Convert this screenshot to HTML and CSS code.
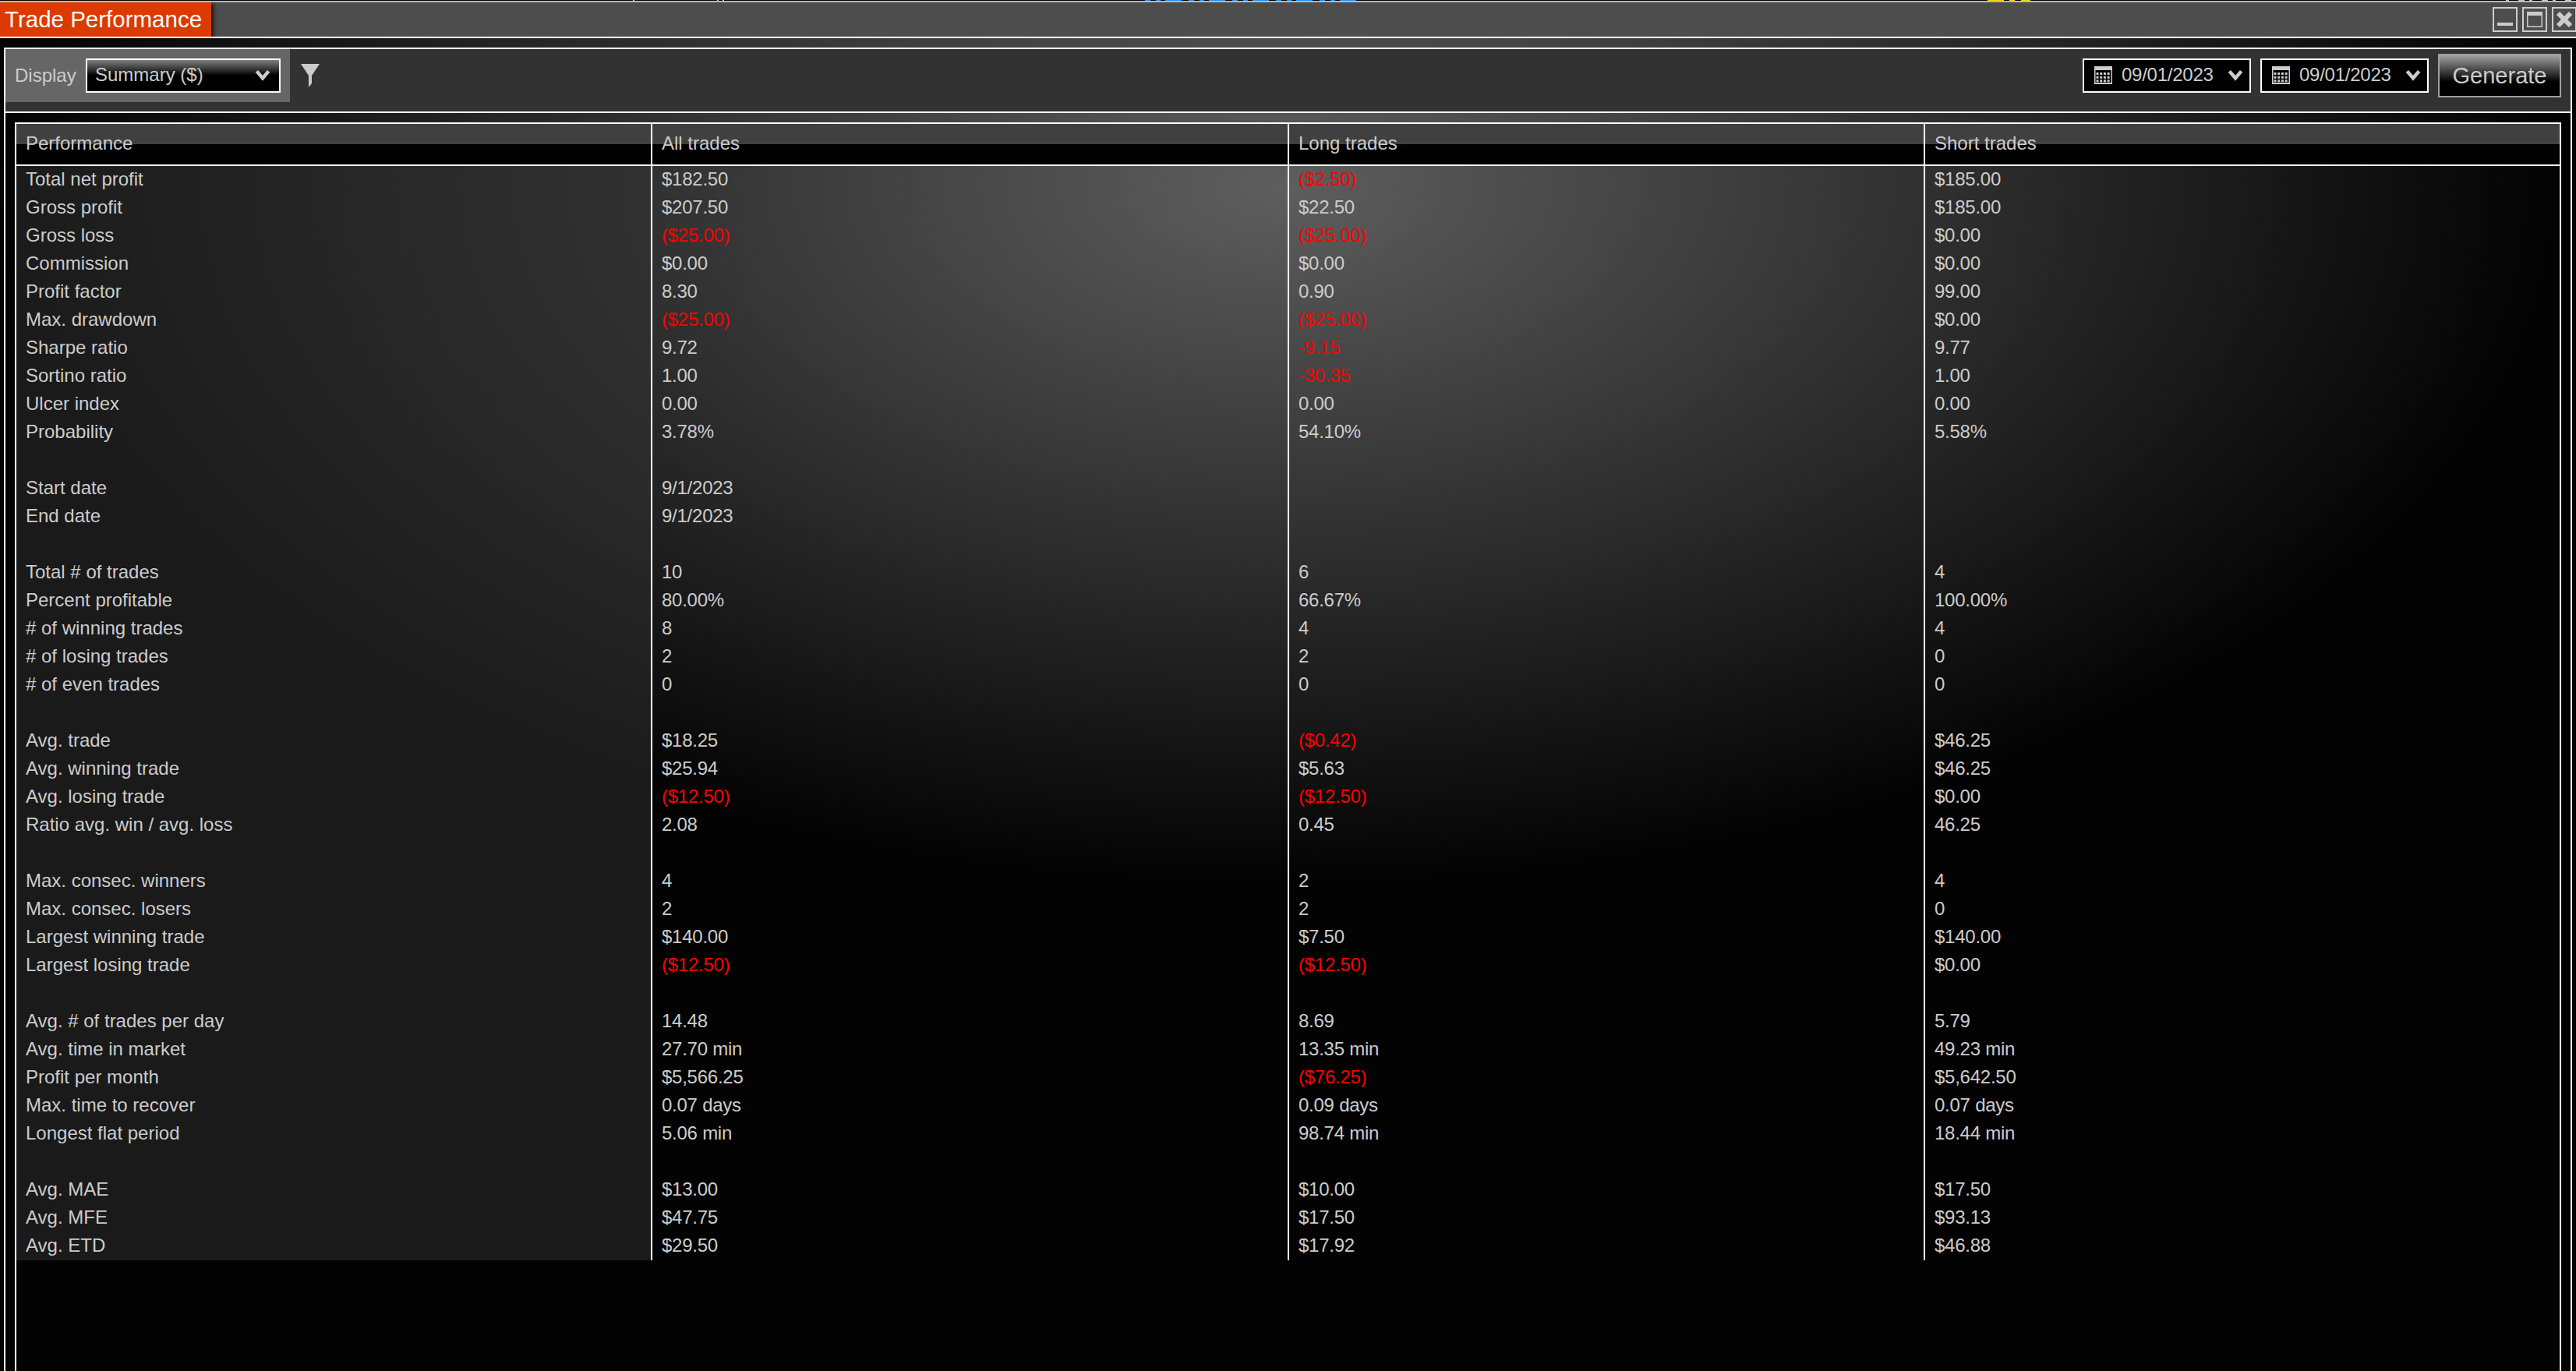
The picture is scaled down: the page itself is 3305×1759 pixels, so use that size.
FILE: index.html
```html
<!DOCTYPE html>
<html lang="en">
<head>
    <meta charset="UTF-8">
    <title>Trade Performance</title>
    <link rel="stylesheet" href="styles.css">
</head>
<body>

<div class="window">
    <div class="behind">
        <span class="behind-white"></span>
        <span class="behind-blue"></span>
        <span class="behind-yellow"></span>
        <span class="behind-end"></span>
    </div>

    <div class="titlebar">
        <div class="title">Trade Performance</div>
        <div class="window-buttons">
            <svg width="32" height="32" viewBox="0 0 32 32"><rect x="1" y="1" width="30" height="30"/><path class="solid" d="M6 20h20v4H6z"/></svg>
            <svg width="32" height="32" viewBox="0 0 32 32"><rect x="1" y="1" width="30" height="30"/><path class="solid" d="M6 6h20v20H6zM7.500 11v13.500h17V11z" fill-rule="evenodd"/></svg>
            <svg width="32" height="32" viewBox="0 0 32 32"><rect x="1" y="1" width="30" height="30"/><path class="cross" d="M8 8l16 16M24 8L8 24"/></svg>
        </div>
    </div>

    <div class="frame">
        <div class="toolbar">
            <div class="display">
                <span>Display</span>
                <div class="select">
                    <span>Summary ($)</span>
                    <svg class="chevron" width="20" height="16" viewBox="0 0 20 16"><path d="M2.400 3.400l7.600 8.900 7.600-8.900"/></svg>
                </div>
            </div>
            <svg class="filter" width="24" height="30" viewBox="0 0 24 30"><path d="M0 0h24L14 15v10l-4 5V15z"/></svg>

            <div class="actions">
                <div class="date">
                    <svg class="calendar" width="23" height="23" viewBox="0 0 23 23"><path d="M0 0h23v23H0zM1.500 5v16h20V5z" fill-rule="evenodd"/><path class="days" d="M2.500 9.500h18M2.500 14.200h18M2.500 18.800h18"/></svg>
                    <span>09/01/2023</span>
                    <svg class="chevron" width="20" height="16" viewBox="0 0 20 16"><path d="M2.400 3.400l7.600 8.900 7.600-8.900"/></svg>
                </div>
                <div class="date">
                    <svg class="calendar" width="23" height="23" viewBox="0 0 23 23"><path d="M0 0h23v23H0zM1.500 5v16h20V5z" fill-rule="evenodd"/><path class="days" d="M2.500 9.500h18M2.500 14.200h18M2.500 18.800h18"/></svg>
                    <span>09/01/2023</span>
                    <svg class="chevron" width="20" height="16" viewBox="0 0 20 16"><path d="M2.400 3.400l7.600 8.900 7.600-8.900"/></svg>
                </div>
                <button class="generate">Generate</button>
            </div>
        </div>

        <div class="report">
            <div class="row header"><div>Performance</div><div>All trades</div><div>Long trades</div><div>Short trades</div></div>
            <div id="rows"></div>
        </div>
    </div>
</div>

<script src="script.js"></script>
</body>
</html>
```
FILE: styles.css
```css
* {
    box-sizing: border-box;
}
body {
    margin: 0;
    background-color: #000;
    color: #ccc;
    font-family: "Liberation Sans", Arial, sans-serif;
    font-size: 24px;
    overflow: hidden;
}
.window {
    display: flex;
    flex-direction: column;
    height: 1759px;
    background: radial-gradient(1640px 895px at 1640px 238px, #5e5e5e, #030303);
}

/* edge of the window underneath */
.behind {
    display: flex;
    height: 1px;
    background-color: #000;
}
.behind-white {
    width: 132px;
    margin-left: 812px;
    background: repeating-linear-gradient(90deg, #ccc 0 2px, #000 2px 108px, #ccc 108px 110px, #000 110px 115px);
}
.behind-blue {
    width: 280px;
    margin-left: 525px;
    background: repeating-linear-gradient(90deg, #1e90ff 0 7px, #000 7px 14px, #1e90ff 14px 20px, #000 20px 26px, #1e90ff 26px 47px, #000 47px 56px);
}
.behind-yellow {
    width: 60px;
    margin-left: 796px;
    background: linear-gradient(90deg, #000 5px, #ffd700 5px 26px, #000 26px 33px, #ffd700 33px 40px, #000 40px 48px, #ffd700 48px);
}
.behind-end {
    width: 90px;
    margin-left: 610px;
    background: repeating-linear-gradient(90deg, #ccc 0 4px, #000 4px 16px, #ccc 16px 24px, #000 24px 30px);
}

.titlebar {
    display: flex;
    justify-content: space-between;
    height: 48px;
    border-top: 2px solid #bab6ba;
    border-bottom: 2px solid #fff;
    background-color: #4d4d4d;
}
.title {
    width: 271px;
    padding-left: 6px;
    background-color: #dc3b00;
    box-shadow: 3px 2px 5px rgba(0, 0, 0, 0.7);
    clip-path: inset(0 -12px 0 0);
    color: #fff;
    font-size: 29.5px;
    line-height: 44px;
}
.window-buttons {
    display: flex;
    gap: 6px;
    padding-top: 6px;
    margin-right: -1px;
}
.window-buttons svg {
    fill: none;
    stroke: #ccc;
    stroke-width: 2;
}
.window-buttons .solid {
    fill: #ccc;
    stroke: none;
}
.window-buttons .cross {
    stroke-width: 6;
}

.frame {
    display: flex;
    flex: 1;
    flex-direction: column;
    margin: 12px 5px 0;
    border: 2px solid #fff;
    border-bottom: none;
}
.toolbar {
    display: flex;
    align-items: flex-start;
    height: 82px;
    border-bottom: 2px solid #fff;
    background-color: #323232;
}
.display {
    display: flex;
    align-items: center;
    justify-content: space-between;
    width: 365px;
    height: 68px;
    padding: 0 12px;
    background-color: #666;
}
.select, .date {
    display: flex;
    align-items: center;
    height: 44px;
    border: 2px solid #fff;
    background-color: #000;
}
.select {
    width: 250px;
    padding: 0 11px 2px 10px;
    background-image: linear-gradient(#808080, #000 50%);
}
.chevron {
    margin-left: auto;
    fill: none;
    stroke: #ccc;
    stroke-width: 4.5;
}
.filter {
    margin: 19px 0 0 14px;
    fill: #ccc;
}
.actions {
    display: flex;
    gap: 12px;
    margin: 6px 12px 0 auto;
}
.date {
    width: 216px;
    margin-top: 6px;
    padding: 0 8px 2px 13px;
    letter-spacing: -0.25px;
}
.calendar {
    margin-right: 12px;
    fill: #ccc;
}
.calendar .days {
    stroke: #ccc;
    stroke-width: 3;
    stroke-dasharray: 3 1.7;
}
.generate {
    width: 158px;
    height: 56px;
    padding: 0;
    border: 2px solid #a0a0a0;
    background: linear-gradient(#a0a0a0, #000 65%);
    color: #ccc;
    font-family: inherit;
    font-size: 29px;
}

.report {
    flex: 1;
    margin: 12px 12px 0;
    border: 2px solid #fff;
    border-bottom: none;
}
.row {
    display: grid;
    grid-template-columns: 816px 817px 816px 1fr;
    height: 36px;
    line-height: 34px;
}
.row div {
    padding-left: 12px;
    white-space: pre;
}
.row div:not(:last-child) {
    border-right: 2px solid #fff;
}
#rows .row div:first-child {
    background-color: rgba(50, 50, 50, 0.5);
    background-clip: padding-box;
}
#rows .row div:not(:first-child) {
    letter-spacing: -0.25px;
}
.header {
    height: 54px;
    border-bottom: 2px solid #fff;
    background: linear-gradient(#404040 50%, #000 50%);
    line-height: 49px;
}
.row .loss {
    color: #f00;
}
```
FILE: script.js
```javascript
const rows = [
    ["Total net profit", "$182.50", "($2.50)", "$185.00"],
    ["Gross profit", "$207.50", "$22.50", "$185.00"],
    ["Gross loss", "($25.00)", "($25.00)", "$0.00"],
    ["Commission", "$0.00", "$0.00", "$0.00"],
    ["Profit factor", "8.30", "0.90", "99.00"],
    ["Max. drawdown", "($25.00)", "($25.00)", "$0.00"],
    ["Sharpe ratio", "9.72", "-9.15", "9.77"],
    ["Sortino ratio", "1.00", "-30.35", "1.00"],
    ["Ulcer index", "0.00", "0.00", "0.00"],
    ["Probability", "3.78%", "54.10%", "5.58%"],
    ["", "", "", ""],
    ["Start date", "9/1/2023", "", ""],
    ["End date", "9/1/2023", "", ""],
    ["", "", "", ""],
    ["Total # of trades", "10", "6", "4"],
    ["Percent profitable", "80.00%", "66.67%", "100.00%"],
    ["# of winning trades", "8", "4", "4"],
    ["# of losing trades", "2", "2", "0"],
    ["# of even trades", "0", "0", "0"],
    ["", "", "", ""],
    ["Avg. trade", "$18.25", "($0.42)", "$46.25"],
    ["Avg. winning trade", "$25.94", "$5.63", "$46.25"],
    ["Avg. losing trade", "($12.50)", "($12.50)", "$0.00"],
    ["Ratio avg. win / avg. loss", "2.08", "0.45", "46.25"],
    ["", "", "", ""],
    ["Max. consec. winners", "4", "2", "4"],
    ["Max. consec. losers", "2", "2", "0"],
    ["Largest winning trade", "$140.00", "$7.50", "$140.00"],
    ["Largest losing trade", "($12.50)", "($12.50)", "$0.00"],
    ["", "", "", ""],
    ["Avg. # of trades per day", "14.48", "8.69", "5.79"],
    ["Avg. time in market", "27.70 min", "13.35 min", "49.23 min"],
    ["Profit per month", "$5,566.25", "($76.25)", "$5,642.50"],
    ["Max. time to recover", "0.07 days", "0.09 days", "0.07 days"],
    ["Longest flat period", "5.06 min", "98.74 min", "18.44 min"],
    ["", "", "", ""],
    ["Avg. MAE", "$13.00", "$10.00", "$17.50"],
    ["Avg. MFE", "$47.75", "$17.50", "$93.13"],
    ["Avg. ETD", "$29.50", "$17.92", "$46.88"]
];

const list = document.getElementById("rows");

rows.forEach(cells => {
    const row = document.createElement("div");
    row.classList.add("row");
    cells.forEach(text => {
        const cell = document.createElement("div");
        cell.textContent = text;
        // Negative values are shown in red
        if (text.startsWith("(") || text.startsWith("-")) {
            cell.classList.add("loss");
        }
        row.appendChild(cell);
    });
    list.appendChild(row);
});
```
